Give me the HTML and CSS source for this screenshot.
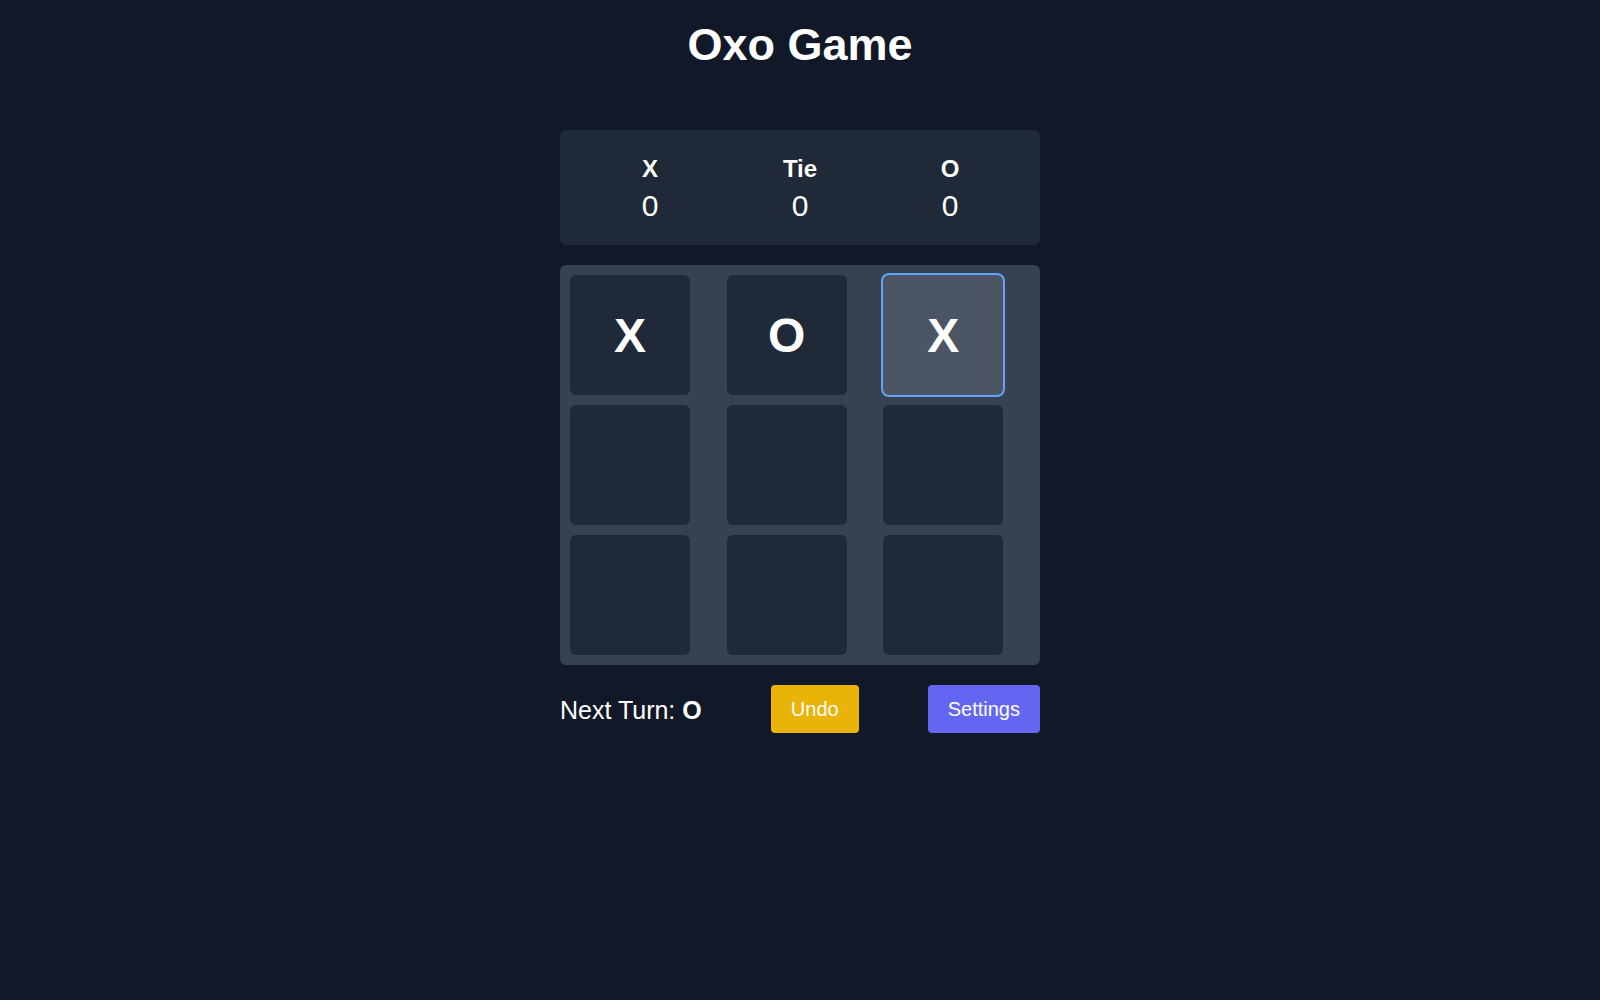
FILE: index.html
```html
<!DOCTYPE html>
<html lang="en">
<head>
<meta charset="utf-8">
<title>Oxo Game</title>
<link rel="stylesheet" href="styles.css">
</head>
<body>
<main class="app">
  <h1 class="title">Oxo Game</h1>
  <section class="game">
    <div class="scores">
      <div class="score">
        <div class="score-label">X</div>
        <div class="score-value">0</div>
      </div>
      <div class="score">
        <div class="score-label">Tie</div>
        <div class="score-value">0</div>
      </div>
      <div class="score">
        <div class="score-label">O</div>
        <div class="score-value">0</div>
      </div>
    </div>
    <div class="board">
      <button class="cell">X</button>
      <button class="cell">O</button>
      <button class="cell cell-active">X</button>
      <button class="cell"></button>
      <button class="cell"></button>
      <button class="cell"></button>
      <button class="cell"></button>
      <button class="cell"></button>
      <button class="cell"></button>
    </div>
    <div class="controls">
      <div class="turn">Next Turn: <strong>O</strong></div>
      <button class="btn btn-undo">Undo</button>
      <button class="btn btn-settings">Settings</button>
    </div>
  </section>
</main>
</body>
</html>
```
FILE: styles.css
```css
* { box-sizing: border-box; }
html, body {
  margin: 0;
  padding: 0;
  background: #111827;
  color: #ffffff;
  font-family: "Liberation Sans", Arial, sans-serif;
}
.app {
  min-height: 100vh;
  display: flex;
  flex-direction: column;
  align-items: center;
  padding-top: 20px;
}
.title {
  margin: 0 0 60px;
  font-size: 45px;
  line-height: 50px;
  font-weight: 700;
}
.game {
  width: 480px;
  display: flex;
  flex-direction: column;
  gap: 20px;
}
.scores {
  background: #1f2937;
  border-radius: 6px;
  padding: 23px 15px 21px;
  display: grid;
  grid-template-columns: repeat(3, 1fr);
  text-align: center;
}
.score-label {
  font-size: 24px;
  line-height: 32px;
  font-weight: 700;
}
.score-value {
  margin-top: 3px;
  font-size: 30px;
  line-height: 36px;
}
.board {
  background: #374151;
  border-radius: 6px;
  padding: 10px;
  display: grid;
  grid-template-columns: repeat(3, 1fr);
  gap: 10px;
}
.cell {
  width: 120px;
  height: 120px;
  border: 0;
  padding: 0;
  border-radius: 6px;
  background: #1f2937;
  color: #ffffff;
  font-family: inherit;
  font-size: 48px;
  font-weight: 700;
  display: flex;
  align-items: center;
  justify-content: center;
  cursor: pointer;
}
.cell-active {
  background: #4b5563;
  box-shadow: 0 0 0 2px #60a5fa;
}
.controls {
  display: flex;
  align-items: center;
  justify-content: space-between;
}
.turn {
  font-size: 25px;
  line-height: 32px;
  padding-top: 2px;
}
.btn {
  border: 0;
  border-radius: 4px;
  padding: 10px 20px;
  font-family: inherit;
  font-size: 20px;
  line-height: 28px;
  color: #ffffff;
  cursor: pointer;
}
.btn-undo { background: #eab308; }
.btn-settings { background: #6366f1; }
```
